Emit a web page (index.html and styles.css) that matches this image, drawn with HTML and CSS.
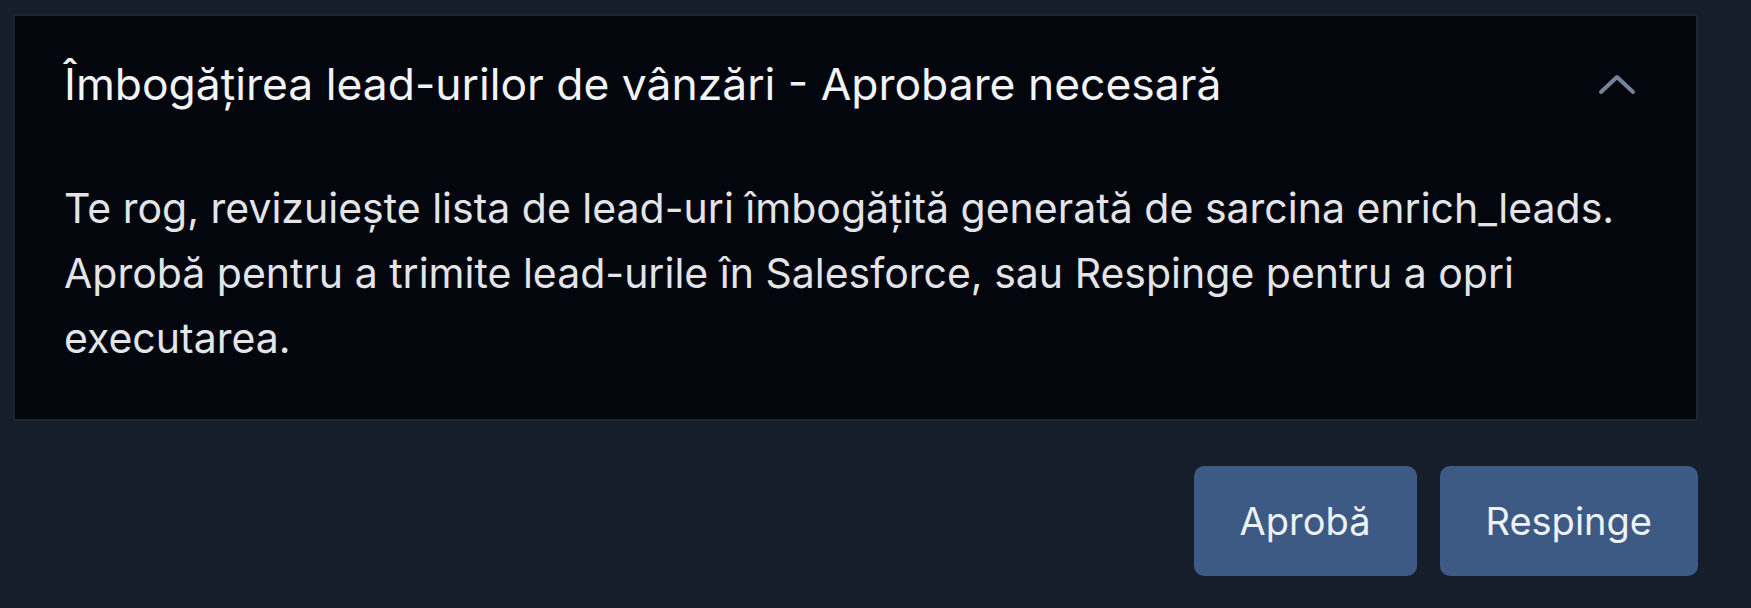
FILE: index.html
```html
<!DOCTYPE html>
<html lang="ro">
<head>
    <meta charset="UTF-8">
    <meta name="viewport" content="width=device-width, initial-scale=1.0">
    <title>Aprobare necesară</title>
    <link rel="stylesheet" href="styles.css">
</head>
<body>
    <div class="wrap">
        <div class="panel">
            <div class="panel-head">
                <span class="panel-title">Îmbogățirea lead-urilor de vânzări - Aprobare necesară</span>
                <svg class="chevron" width="38" height="22" viewBox="0 0 38 22">
                    <polyline points="3,19 19,4 35,19" fill="none" stroke="#74839a" stroke-width="4" stroke-linecap="round" stroke-linejoin="round"/>
                </svg>
            </div>
            <div class="panel-body">
                Te rog, revizuiește lista de lead-uri îmbogățită generată de sarcina enrich_leads.
                Aprobă pentru a trimite lead-urile în Salesforce, sau Respinge pentru a opri executarea.
            </div>
        </div>
        <div class="actions">
            <button type="button" class="btn">Aprobă</button>
            <button type="button" class="btn">Respinge</button>
        </div>
    </div>
</body>
</html>
```
FILE: styles.css
```css
body
{
    margin: 0;
    background-color: #161d2b;
    font-family: Inter, "Noto Sans", sans-serif;
    color: #e4e6ea;
}
.wrap
{
    padding: 14px 53px 0 13px;
}
.panel
{
    background-color: #03060d;
    border: 2px solid #1d2535;
    border-radius: 2px;
}
.panel-head
{
    display: flex;
    align-items: center;
    justify-content: space-between;
    padding: 42px 60px 0 49px;
}
.panel-title
{
    font-size: 44.4px;
    line-height: 52px;
    color: #f2f3f5;
}
.chevron
{
    display: block;
}
.panel-body
{
    padding: 66px 52px 48px 49px;
    font-size: 41px;
    line-height: 65px;
    color: #e2e4e8;
}
.actions
{
    display: flex;
    justify-content: flex-end;
    gap: 23px;
    margin-top: 45px;
}
.btn
{
    height: 110px;
    padding: 0 46px;
    border: none;
    border-radius: 10px;
    background-color: #3d5a84;
    color: #eef2f7;
    font-family: Inter, "Noto Sans", sans-serif;
    font-size: 38px;
}
```
